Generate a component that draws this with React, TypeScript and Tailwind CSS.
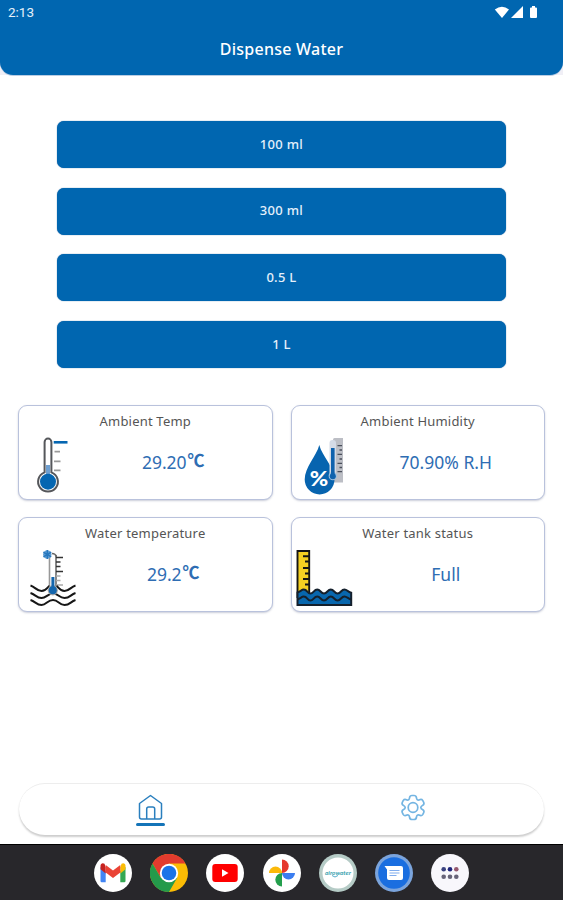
import { ReactNode } from "react";

type Reading = {
  title: string;
  value: string;
  unit?: string;
  icon: ReactNode;
};

const AmbientTempIcon = () => (
  <svg width="62" height="60" viewBox="0 0 62 60" fill="none">
    <path
      d="M25.600 6a3.400 3.400 0 0 1 6.800 0v30.400a9.900 9.900 0 1 1-6.800 0z"
      fill="#fff"
      stroke="#55575b"
      strokeWidth="2"
    />
    <path d="M27 29h4v10h-4z" fill="#6e9fd0" />
    <circle cx="29" cy="45.700" r="8" fill="#0566b1" />
    <path d="M34.700 6.300h13.800" stroke="#0566b1" strokeWidth="2.600" />
    <path
      d="M35.500 15.700H41M35 25.300h6.500M35 34.300h6.500"
      stroke="#9a9a9a"
      strokeWidth="1.800"
    />
  </svg>
);

const HumidityIcon = () => (
  <svg className="-ml-px -mr-px" width="64" height="60" viewBox="0 0 64 60" fill="none">
    <path d="M42 3.500q0-1.500 1.500-1.500H52v44.500H42z" fill="#bcbec5" />
    <path
      d="M28.300 9C31 20 43.500 31 43.500 43.500a14.900 14.900 0 0 1-29.800 0C13.700 31 25.500 20 28.300 9z"
      fill="#0764af"
    />
    <rect x="38.500" y="4" width="6.500" height="38" rx="3" fill="#d5dbe6" />
    <circle cx="41.800" cy="40" r="4.200" fill="#9fc0df" />
    <path d="M41.800 12v28" stroke="#0f62ad" strokeWidth="3.600" />
    <circle cx="41.800" cy="40.300" r="3" fill="#0f62ad" />
    <path
      d="M46.500 9.700H51M46.500 18.300H51M46.500 27.300H51M46.500 35.700H51M48.500 14H51M48.500 23H51M48.500 31.500H51"
      stroke="#4a4f5b"
      strokeWidth="1.300"
    />
    <text
      x="28"
      y="49.800"
      textAnchor="middle"
      textLength="18.500"
      lengthAdjust="spacingAndGlyphs"
      fill="#fff"
      fontSize="20.500"
      fontWeight="900"
      fontFamily="Lato, sans-serif"
    >
      %
    </text>
  </svg>
);

const WaterTempIcon = () => (
  <svg width="62" height="60" viewBox="0 0 62 60" fill="none">
    <path d="M30.500 9v29" stroke="#989898" strokeWidth="1.600" />
    <path d="M37 7V39" stroke="#898989" strokeWidth="2" />
    <path d="M33 5.500q3.500 0 4.300 3" stroke="#666" strokeWidth="1.400" />
    <path
      d="M37 9.500h7M37 14h4.500M37 18.500h4.500M37 23.500h7"
      stroke="#333"
      strokeWidth="1.600"
    />
    <path d="M37 28h4.500M37 32.500h4.500M37 37h7" stroke="#aaa" strokeWidth="1.300" />
    <circle cx="28.300" cy="6.500" r="4.200" fill="#5c9bd3" />
    <path
      d="M28.300 2v9M24.400 4.200l7.800 4.600M32.200 4.200l-7.800 4.600"
      stroke="#2878bd"
      strokeWidth="1.400"
    />
    <path
      d="M11.500 37.500c5 1.500 6 5.500 11 5.500s6-4 8-5M56.500 37.500c-5 1.500-6 5.500-11 5.500s-6-4-8-5"
      stroke="#171717"
      strokeWidth="2"
    />
    <path
      d="M11.500 45c5 1.500 6 5 11 5s6-4.500 11.500-4.500S40 50 45.500 50s6-3.500 11-5M11.500 52c5 1.500 6 5 11 5s6-5 11.500-5 6 5 11.500 5 6-3.500 11-5"
      stroke="#171717"
      strokeWidth="2"
    />
    <circle cx="33.800" cy="42.300" r="5.100" fill="#aaa" />
    <circle cx="33.800" cy="42.300" r="4" fill="#1466ad" />
    <path d="M33.900 29v13" stroke="#1466ad" strokeWidth="3" />
  </svg>
);

const TankIcon = () => (
  <svg className="-ml-px -mr-px" width="64" height="60" viewBox="0 0 64 60" fill="none">
    <path d="M6.500 3h11.700v46H6.500z" fill="#f5d022" stroke="#151515" strokeWidth="1.900" />
    <path
      d="M12 8.200h6M14 13.500h4M12 20h6M14 25.500h4M12 31h6M14 36.500h4"
      stroke="#151515"
      strokeWidth="1.900"
    />
    <path
      d="M6.500 44.500c3-1 4-3 6.300-3 3.500 0 3.500 4 6.600 4s3.500-4 6.800-4 3.500 4 6.800 4 3.500-4 6.800-4 3.500 4 6.800 4 3.500-4 6.800-4c2.500 0 4 2.500 6.800 3.300V57H6.500z"
      fill="#0867ae"
      stroke="#15202c"
      strokeWidth="2"
    />
    <path
      d="M6.500 51.500c3-1 4-3 6.300-3 3.500 0 3.500 4 6.600 4s3.500-4 6.800-4 3.500 4 6.800 4 3.500-4 6.800-4 3.500 4 6.800 4 3.500-4 6.800-4c2.500 0 4 2.500 6.800 3"
      stroke="#15202c"
      strokeWidth="2"
    />
  </svg>
);

const amounts = ["100 ml", "300 ml", "0.5 L", "1 L"];

const readings: Reading[] = [
  {
    title: "Ambient Temp",
    value: "29.20",
    unit: "℃",
    icon: <AmbientTempIcon />,
  },
  {
    title: "Ambient Humidity",
    value: "70.90% R.H",
    icon: <HumidityIcon />,
  },
  {
    title: "Water temperature",
    value: "29.2",
    unit: "℃",
    icon: <WaterTempIcon />,
  },
  {
    title: "Water tank status",
    value: "Full",
    icon: <TankIcon />,
  },
];

const Header = () => (
  <header className="bg-[#f0eff6]">
    <div className="h-[75px] rounded-b-[13px] bg-[#0066b0] text-white shadow-[0_1px_0_#b9cde4]">
      <div className="flex h-[25px] items-center justify-between pl-2 pr-[25px]">
        <span className="font-[Roboto] text-[13.5px] text-[#e6f0fa]">2:13</span>
        <svg width="44" height="14" viewBox="0 0 44 14" fill="#fff">
          <path d="M.800 3.500Q8-2 15 3.500L8 12z" />
          <path d="M29 0v12H17z" />
          <path d="M38 1.500V0h3v1.500h1q1 0 1 1V11q0 1-1 1h-5q-1 0-1-1V2.500q0-1 1-1z" />
        </svg>
      </div>
      <h1 className="text-center text-[16px] leading-[49px] font-medium tracking-[0.25px]">
        Dispense Water
      </h1>
    </div>
  </header>
);

const ReadingCard = ({ title, value, unit, icon }: Reading) => (
  <div className="h-[95px] rounded-[9px] border border-[#b9c2dc] bg-white shadow-[0_1px_2px_rgba(80,90,130,0.3)]">
    <p className="h-[30px] pt-[5px] text-center text-[13px] leading-[20px] tracking-[0.2px] text-[#555]">
      {title}
    </p>
    <div className="flex h-[60px]">
      {icon}
      <p className="flex flex-1 items-center justify-center pr-[6px] pb-[8px] text-[17.5px] text-[#2e6db3]">
        {value}
        {unit && (
          <span className="ml-px pb-[4px] font-['Noto_Sans_CJK_JP'] text-[17px] leading-5 font-bold">
            {unit}
          </span>
        )}
      </p>
    </div>
  </div>
);

const TabBar = () => (
  <nav className="mx-[19px] grid h-[52px] grid-cols-2 rounded-full border-t border-[#ededed] bg-white shadow-[0_2px_2px_rgba(0,0,0,0.2)]">
    <div className="flex flex-col items-center pt-[10px]">
      <svg width="25" height="27" viewBox="0 0 25 27" fill="none" stroke="#2a7fbe" strokeWidth="1.500">
        <path d="M12.500 1.500 23.500 9.500v13.500q0 2-2 2h-18q-2 0-2-2V9.500z" strokeLinejoin="round" />
        <path d="M8.700 25V15q0-2 2-2h4q2 0 2 2v10" />
      </svg>
      <div className="mt-[2px] h-[3px] w-[29px] rounded-full bg-[#1474b8]" />
    </div>
    <div className="flex justify-center pt-[10px]">
      <svg width="26" height="27" viewBox="0 0 26 27" fill="none" stroke="#74b5e2" strokeWidth="1.700">
        <path
          d="M9.600 3.500Q9.900 1.500 12 1.500h2q2.100 0 2.400 2 .3 2.900 2.600 2.500 2.500-1.400 3.700.4l1 1.900q.8 1.800-.9 2.900-2 1-2 2.300t2 2.300q1.700 1.100.9 2.900l-1 1.900q-1.200 1.800-3.700.4-2.300-.4-2.600 2.500-.3 2-2.400 2h-2q-2.100 0-2.400-2-.3-2.900-2.600-2.500-2.500 1.400-3.700-.4l-1-1.900q-.8-1.800.9-2.900 2-1 2-2.300t-2-2.300Q1.500 10.100 2.300 8.300l1-1.900Q4.500 4.600 7 6q2.300.4 2.600-2.500z"
          strokeLinejoin="round"
        />
        <circle cx="13" cy="13.500" r="4.800" />
      </svg>
    </div>
  </nav>
);

const Dock = () => (
  <footer className="flex h-[56px] items-center justify-center gap-[18.2px] border-t border-black bg-[#28272b]">
    <svg width="38" height="38" viewBox="0 0 38 38">
      <circle cx="19" cy="19" r="19" fill="#fff" />
      <path d="M6.500 13v14q0 1.200 1.200 1.200h4V17z" fill="#4285f4" />
      <path d="M31.500 13v14q0 1.200-1.200 1.200h-4V17z" fill="#34a853" />
      <path d="M26.300 13.500v6l5.200-4.300V12c0-3-2.500-3.500-4-2.200z" fill="#fbbc04" />
      <path d="M11.700 13v6.500l-5.200-4.300V12c0-3 2.500-3.500 4-2.200z" fill="#c5221f" />
      <path d="M11.700 11v7.500L19 24l7.300-5.500V11L19 16.500z" fill="#ea4335" />
    </svg>
    <svg width="38" height="38" viewBox="0 0 38 38">
      <circle cx="19" cy="19" r="19" fill="#fbbc05" />
      <path d="M2.500 9.500A19 19 0 0 1 35.500 9.500H19v10L11 24z" fill="#e23b2e" />
      <path d="M2.500 9.500A19 19 0 0 0 19 38l8.200-14.200L19 19l-8.200 4.700z" fill="#249a4b" />
      <circle cx="19" cy="19" r="9.200" fill="#fff" />
      <circle cx="19" cy="19" r="7.300" fill="#1a73e8" />
    </svg>
    <svg width="38" height="38" viewBox="0 0 38 38">
      <circle cx="19" cy="19" r="19" fill="#fff" />
      <rect x="6.300" y="10" width="25.400" height="18" rx="3" fill="#f00" />
      <path d="M16 15.200v7.600l6.500-3.800z" fill="#fff" />
    </svg>
    <svg width="38" height="38" viewBox="0 0 38 38">
      <circle cx="19" cy="19" r="19" fill="#fff" />
      <path d="M19 5.500a6.700 6.700 0 0 1 0 13.400z" fill="#e5382d" />
      <path d="M32 19a6.500 6.500 0 0 1-13 0z" fill="#3b7df0" />
      <path d="M19 32.500a6.700 6.700 0 0 1 0-13.400z" fill="#249f4d" />
      <path d="M6 19a6.500 6.500 0 0 1 13 0z" fill="#fbb90a" />
    </svg>
    <svg width="38" height="38" viewBox="0 0 38 38">
      <circle cx="19" cy="19" r="19" fill="#b5cbc6" />
      <circle cx="19" cy="19" r="15.500" fill="#fff" />
      <text
        x="19"
        y="20.500"
        textAnchor="middle"
        textLength="26"
        lengthAdjust="spacingAndGlyphs"
        fill="#3aa2b0"
        fontSize="6"
        fontWeight="700"
        fontStyle="italic"
        fontFamily="Lato, sans-serif"
      >
        airowater
      </text>
      <path d="M13 21.500q3 3 6 0" fill="none" stroke="#55aeca" strokeWidth="1" />
    </svg>
    <svg width="38" height="38" viewBox="0 0 38 38">
      <circle cx="19" cy="19" r="19" fill="#7ba4dc" />
      <circle cx="19" cy="19" r="15.800" fill="#1a6ee0" />
      <path d="M9.500 12H26q2 0 2 2v10q0 2-2 2H14q-2 0-2-2v-8.500z" fill="#fff" />
      <path d="M14.500 16.500h10M14.500 19h10M14.500 21.500h7" stroke="#7facee" strokeWidth="1.200" />
    </svg>
    <svg width="38" height="38" viewBox="0 0 38 38">
      <circle cx="19" cy="19" r="19" fill="#f8f7fc" />
      <g fill="#676479">
        <circle cx="12.700" cy="15.200" r="2.300" fill="#39417f" />
        <circle cx="19" cy="15.200" r="2.300" fill="#1e247c" />
        <circle cx="25.300" cy="15.200" r="2.300" fill="#95586f" />
        <circle cx="12.700" cy="22.800" r="2.300" />
        <circle cx="19" cy="22.800" r="2.300" />
        <circle cx="25.300" cy="22.800" r="2.300" />
      </g>
    </svg>
  </footer>
);

export default function App() {
  return (
    <div className="flex h-[900px] w-[563px] flex-col bg-white font-['Noto_Sans',sans-serif]">
      <Header />
      <div className="mx-[57px] mt-[46px] flex flex-col gap-[19.6px]">
        {amounts.map((amount) => (
          <button
            key={amount}
            className="h-[47px] rounded-[7px] bg-[#0066b0] text-[13px] font-medium tracking-[0.3px] text-[#e4f0fb] shadow-[0_0_1px_#0b4f8f]"
          >
            {amount}
          </button>
        ))}
      </div>
      <div className="mx-[18px] mt-[37px] grid grid-cols-2 gap-x-[18px] gap-y-[17.5px]">
        {readings.map((reading) => (
          <ReadingCard key={reading.title} {...reading} />
        ))}
      </div>
      <div className="mt-auto pb-[9px]">
        <TabBar />
      </div>
      <Dock />
    </div>
  );
}
